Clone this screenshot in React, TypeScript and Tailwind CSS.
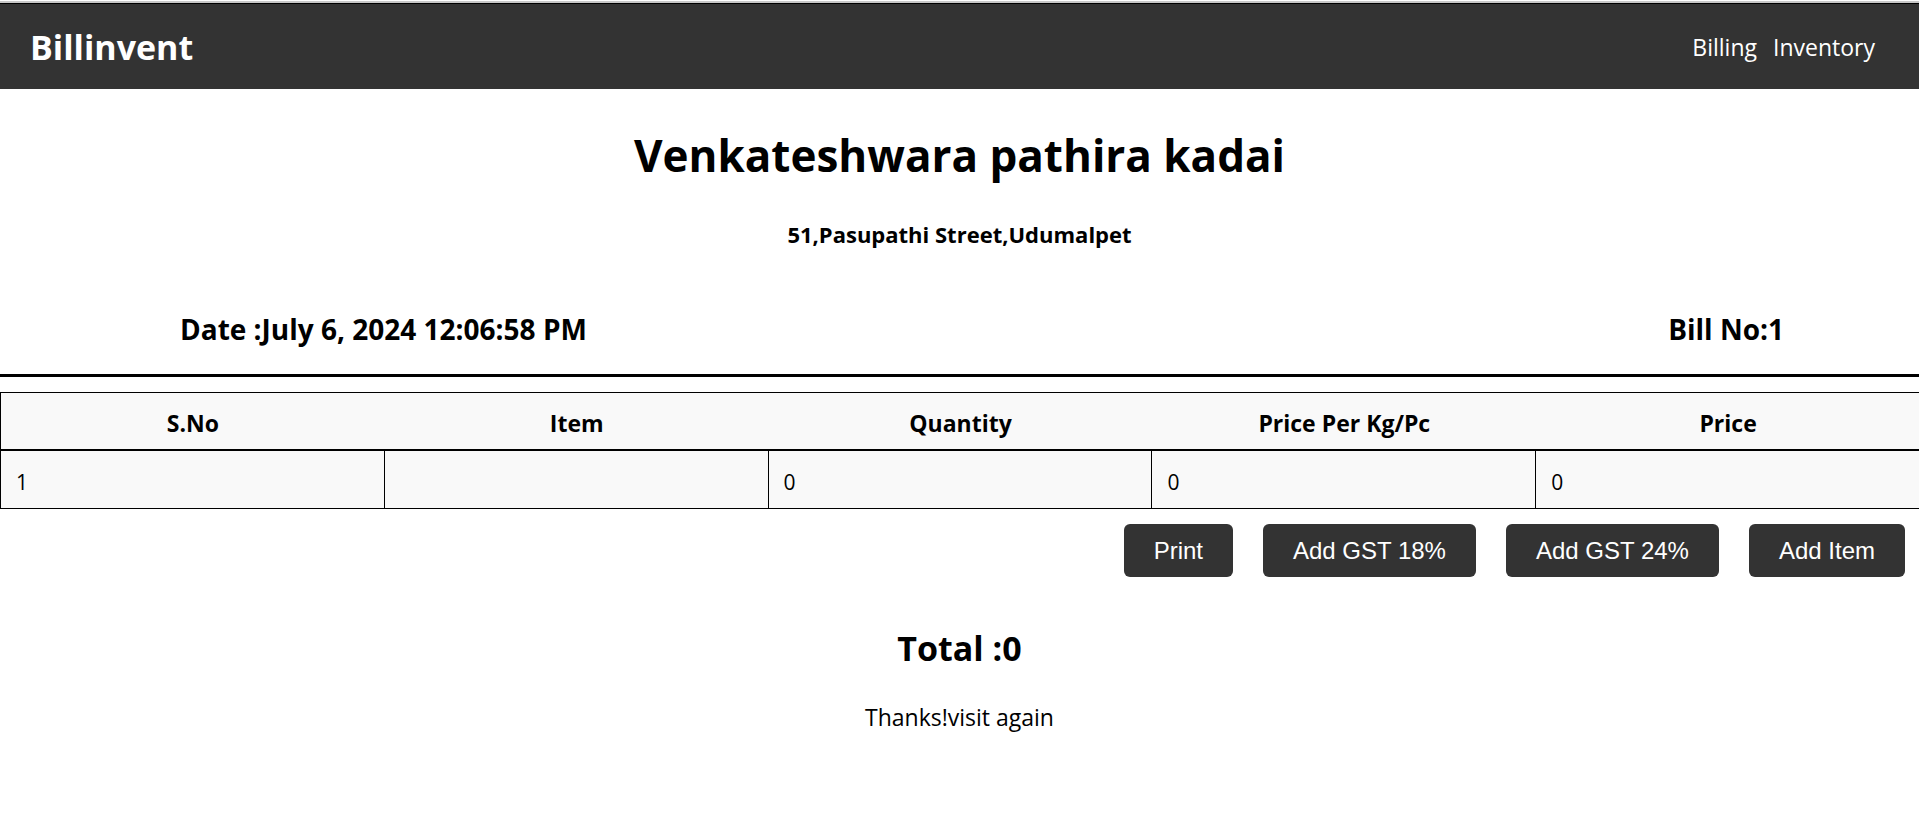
const columns = ["S.No", "Item", "Quantity", "Price Per Kg/Pc", "Price"];

const rows = [["1", "", "0", "0", "0"]];

const actions = ["Print", "Add GST 18%", "Add GST 24%", "Add Item"];

function Header() {
  return (
    <header className="flex h-[86px] items-center justify-between border-t border-black bg-[#333333] pr-11 pl-[30px] text-white">
      <div className="text-[34px] leading-[48px] font-bold">Billinvent</div>
      <nav className="flex gap-4 text-[23px] leading-8">
        <a href="#billing">Billing</a>
        <a href="#inventory">Inventory</a>
      </nav>
    </header>
  );
}

function ItemTable() {
  return (
    <div className="overflow-hidden">
      <table className="w-[calc(100%+1px)] table-fixed border-separate border-spacing-0 border-l border-black bg-[#f9f9f9]">
        <thead>
          <tr>
            {columns.map((name) => (
              <th
                key={name}
                scope="col"
                className="h-[58px] border-y border-black px-4 pt-1 text-center text-[23px] leading-8 font-bold"
              >
                {name}
              </th>
            ))}
          </tr>
        </thead>
        <tbody>
          {rows.map((row) => (
            <tr key={row[0]}>
              {row.map((value, index) => (
                <td
                  key={columns[index]}
                  className="h-[59px] border-y border-r border-black px-[15px] pt-1 text-left text-[21px] leading-7 last:border-r-0"
                >
                  {value}
                </td>
              ))}
            </tr>
          ))}
        </tbody>
      </table>
    </div>
  );
}

export default function App() {
  return (
    <div className="bg-white font-['Open_Sans','Noto_Sans',sans-serif] text-black">
      <div className="h-[3px] border-b-2 border-[#c8c8c8]" />
      <Header />
      <main>
        <h1 className="pt-[34px] text-center text-[44px] leading-[64px] font-bold">
          Venkateshwara pathira kadai
        </h1>
        <h2 className="pt-[31px] text-center text-[22px] leading-8 font-bold">
          51,Pasupathi Street,Udumalpet
        </h2>
        <div className="flex justify-between border-b-[3px] border-black pt-[61px] pr-[135px] pb-[27px] pl-[180px] text-[28px] leading-9 font-bold">
          <p>Date :July 6, 2024 12:06:58 PM</p>
          <p>Bill No:1</p>
        </div>
        <div className="pt-[15px]">
          <ItemTable />
        </div>
        <div className="flex justify-end gap-[30px] pt-[15px] pr-[14px]">
          {actions.map((label) => (
            <button
              key={label}
              type="button"
              className="rounded-md bg-[#333333] px-[30px] py-[13px] font-['Liberation_Sans',Arial,sans-serif] text-2xl leading-[27px] text-white"
            >
              {label}
            </button>
          ))}
        </div>
        <h2 className="pt-[47px] text-center text-[34px] leading-[48px] font-bold">Total :0</h2>
        <p className="pt-[29px] text-center text-[23px] leading-8">Thanks!visit again</p>
      </main>
    </div>
  );
}
